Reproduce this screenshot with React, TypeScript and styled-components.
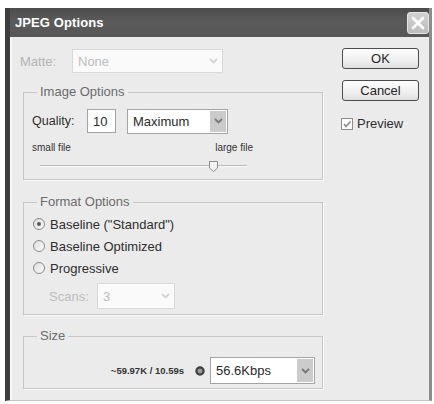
import React from "react";
import styled, { createGlobalStyle } from "styled-components";

const GlobalStyle = createGlobalStyle`
    html, body {
        margin: 0;
        padding: 0;
        background: #fff;
    }
    body {
        font-family: "Liberation Sans", Arial, sans-serif;
    }
`;

const Chevron = ({ color }: { color: string }) => (
    <svg width="9" height="6" viewBox="0 0 9 6">
        <path d="M1 1 L4.5 4.5 L8 1" fill="none" stroke={color} strokeWidth="1.8" />
    </svg>
);

interface comboProps {
    value: string,
    width: number,
    height: number,
    disabled?: boolean
};

const Combo: React.FC<comboProps> = ({ value, width, height, disabled }) => (
    <ComboBox $w={width} $h={height} $disabled={disabled}>
        <ComboText $disabled={disabled}>{value}</ComboText>
        <ComboArrow $disabled={disabled}>
            <Chevron color={disabled ? "#d4d4d4" : "#777"} />
        </ComboArrow>
    </ComboBox>
);

const Radio: React.FC<{ label: string, checked?: boolean }> = ({ label, checked }) => (
    <RadioRow>
        <RadioCircle>{checked && <RadioDot />}</RadioCircle>
        {label}
    </RadioRow>
);

const App = () => {
    return (
        <>
            <GlobalStyle />
            <Window>
                <TitleBar>
                    <Title>JPEG Options</Title>
                    <CloseButton>
                        <svg width="14" height="14" viewBox="0 0 14 14">
                            <path d="M2 2 L12 12 M12 2 L2 12" stroke="#fff" strokeWidth="2.6" strokeLinecap="round" />
                        </svg>
                    </CloseButton>
                </TitleBar>
                <Body>
                    <LeftCol>
                        <MatteRow>
                            <MatteLabel>Matte:</MatteLabel>
                            <Combo value="None" width={151} height={24} disabled />
                        </MatteRow>

                        <Group $mt={12} $pad="9px 8px 12px 8px">
                            <Legend>Image Options</Legend>
                            <QualityRow>
                                <QualityLabel>Quality:</QualityLabel>
                                <NumberBox>10</NumberBox>
                                <Combo value="Maximum" width={101} height={25} />
                            </QualityRow>
                            <SliderLabels>
                                <span>small file</span>
                                <span>large file</span>
                            </SliderLabels>
                            <Track>
                                <Thumb>
                                    <svg width="11" height="13" viewBox="0 0 11 13">
                                        <path d="M1.5 1.5 H9.5 V8 L5.5 11.5 L1.5 8 Z" fill="#f4f4f4" stroke="#8a8a8a" strokeWidth="1" />
                                    </svg>
                                </Thumb>
                            </Track>
                        </Group>

                        <Group $mt={15} $pad="4px 8px 5px 8px">
                            <Legend>Format Options</Legend>
                            <Radio label={'Baseline ("Standard")'} checked />
                            <Radio label="Baseline Optimized" />
                            <Radio label="Progressive" />
                            <ScansRow>
                                <ScansLabel>Scans:</ScansLabel>
                                <Combo value="3" width={78} height={26} disabled />
                            </ScansRow>
                        </Group>

                        <Group $mt={14} $pad="14px 7px 4px 8px">
                            <Legend>Size</Legend>
                            <SizeRow>
                                <SizeText>~59.97K / 10.59s</SizeText>
                                <SizeIcon>
                                    <svg width="10" height="10" viewBox="0 0 10 10">
                                        <circle cx="5" cy="5" r="3.6" fill="#9a9a9a" stroke="#3c3c3c" strokeWidth="2.2" />
                                    </svg>
                                </SizeIcon>
                                <Combo value="56.6Kbps" width={105} height={27} />
                            </SizeRow>
                        </Group>
                    </LeftCol>

                    <RightCol>
                        <DialogButton>OK</DialogButton>
                        <DialogButton>Cancel</DialogButton>
                        <CheckRow>
                            <CheckBox>
                                <svg width="10" height="10" viewBox="0 0 10 10">
                                    <path d="M2 5 L4 7.5 L8.5 2.5" fill="none" stroke="#8c8c8c" strokeWidth="1.6" />
                                </svg>
                            </CheckBox>
                            Preview
                        </CheckRow>
                    </RightCol>
                </Body>
            </Window>
        </>
    );
};

const Window = styled.div`
    margin: 8px 0 0 5px;
    width: 427px;
    height: 393px;
    box-sizing: border-box;
    display: flex;
    flex-direction: column;
    border-left: 5px solid #3e3e3e;
    border-right: 3px solid #8c8c8c;
    border-bottom: 1px solid #c4c4c4;
    background: #ebebeb;
`;

const TitleBar = styled.div`
    height: 29px;
    flex: none;
    display: flex;
    align-items: center;
    justify-content: space-between;
    padding: 0 0 0 5px;
    background: linear-gradient(#4b4b4b, #5b5b5b 45%, #565656);
`;

const Title = styled.span`
    color: #fff;
    font-size: 13px;
    font-weight: bold;
    letter-spacing: 0.1px;
`;

const CloseButton = styled.div`
    width: 22px;
    height: 22px;
    box-sizing: border-box;
    display: flex;
    align-items: center;
    justify-content: center;
    border: 1px solid #e6e6e6;
    border-radius: 3px;
    background: linear-gradient(#d2d2d2, #bdbdbd);
`;

const Body = styled.div`
    flex: 1;
    display: flex;
    box-shadow: inset 2px 0 0 #f8f8f8;
`;

const LeftCol = styled.div`
    width: 320px;
    box-sizing: border-box;
    padding: 12px 0 0 10px;
    display: flex;
    flex-direction: column;
`;

const RightCol = styled.div`
    padding: 11px 0 0 12px;
    display: flex;
    flex-direction: column;
`;

const MatteRow = styled.div`
    display: flex;
    align-items: center;
    height: 24px;
`;

const MatteLabel = styled.span`
    width: 52px;
    font-size: 13px;
    color: #b4b4b4;
`;

const ComboBox = styled.div<{ $w: number, $h: number, $disabled?: boolean }>`
    display: flex;
    width: ${p => p.$w}px;
    height: ${p => p.$h}px;
    box-sizing: border-box;
    border: 1px solid ${p => p.$disabled ? "#d8d8d8" : "#a4a4a4"};
    background: ${p => p.$disabled ? "#fafafa" : "#fff"};
`;

const ComboText = styled.div<{ $disabled?: boolean }>`
    flex: 1;
    display: flex;
    align-items: center;
    padding-left: 5px;
    font-size: 13px;
    color: ${p => p.$disabled ? "#bcbcbc" : "#2a2a2a"};
`;

const ComboArrow = styled.div<{ $disabled?: boolean }>`
    width: 16px;
    margin: 1px;
    display: flex;
    align-items: center;
    justify-content: center;
    background: ${p => p.$disabled ? "transparent" : "#cbcbcb"};
`;

const Group = styled.fieldset<{ $mt: number, $pad: string }>`
    margin: ${p => p.$mt}px 0 0 3px;
    width: 300px;
    box-sizing: border-box;
    min-width: 0;
    border: 1px solid #c6c6c6;
    box-shadow: 1px 1px 0 #fafafa;
    padding: ${p => p.$pad};
`;

const Legend = styled.legend`
    margin-left: 5px;
    padding: 0 3px;
    font-size: 13px;
    line-height: 14px;
    color: #6c6c6c;
`;

const QualityRow = styled.div`
    display: flex;
    align-items: center;
    height: 26px;
`;

const QualityLabel = styled.span`
    width: 55px;
    font-size: 12.5px;
    color: #2e2e2e;
`;

const NumberBox = styled.div`
    width: 29px;
    height: 24px;
    box-sizing: border-box;
    margin-right: 11px;
    padding-left: 5px;
    display: flex;
    align-items: center;
    border: 1px solid #a4a4a4;
    background: #fff;
    font-size: 13px;
    color: #2a2a2a;
`;

const SliderLabels = styled.div`
    margin-top: 8px;
    width: 221px;
    display: flex;
    justify-content: space-between;
    font-size: 10px;
    line-height: 12px;
    color: #333;
`;

const Track = styled.div`
    position: relative;
    margin: 11px 0 0 8px;
    width: 207px;
    height: 0;
    border-top: 1px solid #b8b8b8;
    border-bottom: 1px solid #fbfbfb;
`;

const Thumb = styled.div`
    position: absolute;
    left: 168px;
    top: -6px;
    display: flex;
`;

const RadioRow = styled.div`
    display: flex;
    align-items: center;
    gap: 5px;
    height: 22px;
    padding-left: 1px;
    font-size: 13px;
    color: #2e2e2e;
`;

const RadioCircle = styled.div`
    width: 12px;
    height: 12px;
    box-sizing: border-box;
    border-radius: 50%;
    border: 1px solid #8a8a8a;
    background: linear-gradient(135deg, #dcdcdc, #fdfdfd);
    display: flex;
    align-items: center;
    justify-content: center;
`;

const RadioDot = styled.div`
    width: 4px;
    height: 4px;
    border-radius: 50%;
    background: #5a5a5a;
`;

const ScansRow = styled.div`
    margin-top: 4px;
    padding-left: 17px;
    display: flex;
    align-items: center;
`;

const ScansLabel = styled.span`
    width: 48px;
    font-size: 13px;
    color: #bdbdbd;
`;

const SizeRow = styled.div`
    display: flex;
    align-items: center;
    justify-content: flex-end;
`;

const SizeText = styled.span`
    font-size: 9.5px;
    font-weight: bold;
    color: #333;
    margin-right: 11px;
`;

const SizeIcon = styled.span`
    display: flex;
    margin-right: 5px;
`;

const DialogButton = styled.div`
    width: 77px;
    height: 21px;
    box-sizing: border-box;
    margin-bottom: 11px;
    display: flex;
    align-items: center;
    justify-content: center;
    border: 1px solid #4c4c4c;
    border-radius: 3px;
    background: linear-gradient(#fefefe, #ececec 70%, #dedede);
    font-size: 13px;
    color: #262626;
`;

const CheckRow = styled.div`
    margin-top: 4px;
    margin-left: -1px;
    display: flex;
    align-items: center;
    gap: 4px;
    font-size: 13px;
    color: #2e2e2e;
`;

const CheckBox = styled.div`
    width: 12px;
    height: 12px;
    box-sizing: border-box;
    border: 1px solid #8c8c8c;
    background: #fdfdfd;
    display: flex;
    align-items: center;
    justify-content: center;
`;

export default App;
